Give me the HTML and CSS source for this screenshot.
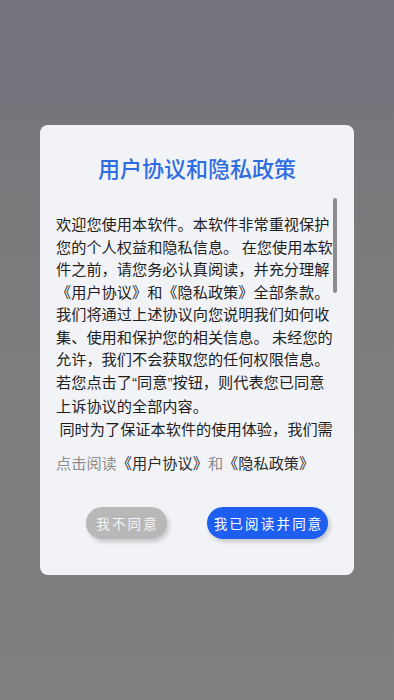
FILE: index.html
```html
<!DOCTYPE html>
<html lang="zh-CN">
<head>
<meta charset="utf-8">
<link rel="stylesheet" href="styles.css">
</head>
<body>
<div class="screen">
  <div class="top-band"></div>
  <div class="dialog">
    <h1 class="title">用户协议和隐私政策</h1>
    <div class="body">
      <p class="text">欢迎您使用本软件。本软件非常重视保护<br>您的个人权益和隐私信息。 在您使用本软<br>件之前，请您务必认真阅读，并充分理解<br>《用户协议》和《隐私政策》全部条款。<br>我们将通过上述协议向您说明我们如何收<br>集、使用和保护您的相关信息。 未经您的<br>允许，我们不会获取您的任何权限信息。<br>若您点击了<span class="q">“</span>同意<span class="q">”</span>按钮，则代表您已同意<br>上诉协议的全部内容。<br>&nbsp;同时为了保证本软件的使用体验，我们需</p>
      <div class="thumb"></div>
    </div>
    <p class="links"><span class="muted">点击阅读</span>《用户协议》<span class="muted">和</span>《隐私政策》</p>
    <div class="actions">
      <button class="btn btn-gray">我不同意</button>
      <button class="btn btn-blue">我已阅读并同意</button>
    </div>
  </div>
</div>
</body>
</html>
```

FILE: styles.css
```css
html, body {
  margin: 0;
  padding: 0;
}
body {
  background: #7b7b7d;
  font-family: "Noto Sans CJK SC", "Noto Sans", sans-serif;
}
.screen {
  width: 394px;
  height: 700px;
  display: flex;
  flex-direction: column;
  background: linear-gradient(#74757c 0px, #74757c 95px, #77787b 130px, #7d7d7e 400px, #7f7f7f 700px);
}
.top-band {
  height: 125px;
  flex: none;
}
.dialog {
  margin: 0 40px;
  width: 314px;
  height: 450px;
  box-sizing: border-box;
  background: #f2f3f7;
  border-radius: 8px;
  padding-top: 26px;
  display: flex;
  flex-direction: column;
}
.title {
  margin: 0;
  font-size: 22px;
  line-height: 32px;
  font-weight: 500;
  color: #2e6ce2;
  text-align: center;
}
.body {
  position: relative;
  margin-top: 15px;
  height: 244px;
  overflow: hidden;
}
.text {
  margin: 0;
  padding: 14px 0 0 16px;
  font-size: 15.2px;
  line-height: 22.5px;
  color: #1e1e1e;
  white-space: nowrap;
}
.q {
  font-family: "Liberation Sans", sans-serif;
}
.thumb {
  position: absolute;
  left: 293px;
  top: 0;
  width: 4px;
  height: 95px;
  border-radius: 2px;
  background: #8c8c8e;
}
.links {
  margin: 9px 0 0;
  padding-left: 16px;
  font-size: 15.2px;
  line-height: 22px;
  color: #2a2a2a;
  white-space: nowrap;
}
.muted {
  color: #8d8d8d;
}
.actions {
  margin-top: 34px;
  display: flex;
  padding-left: 46px;
  gap: 40px;
}
.btn {
  height: 32px;
  border: none;
  border-radius: 16px;
  font-family: "Noto Sans CJK SC", "Noto Sans", sans-serif;
  font-size: 13.5px;
  font-weight: 400;
  letter-spacing: 2.2px;
  color: #ffffff;
  padding: 0 0 0 2.2px;
  box-shadow: 2px 3px 4px rgba(0, 0, 0, 0.18);
}
.btn-gray {
  width: 81px;
  background: #b8b8b9;
  color: #f4f4f4;
}
.btn-blue {
  width: 121px;
  background: #1e5ff1;
}
```
